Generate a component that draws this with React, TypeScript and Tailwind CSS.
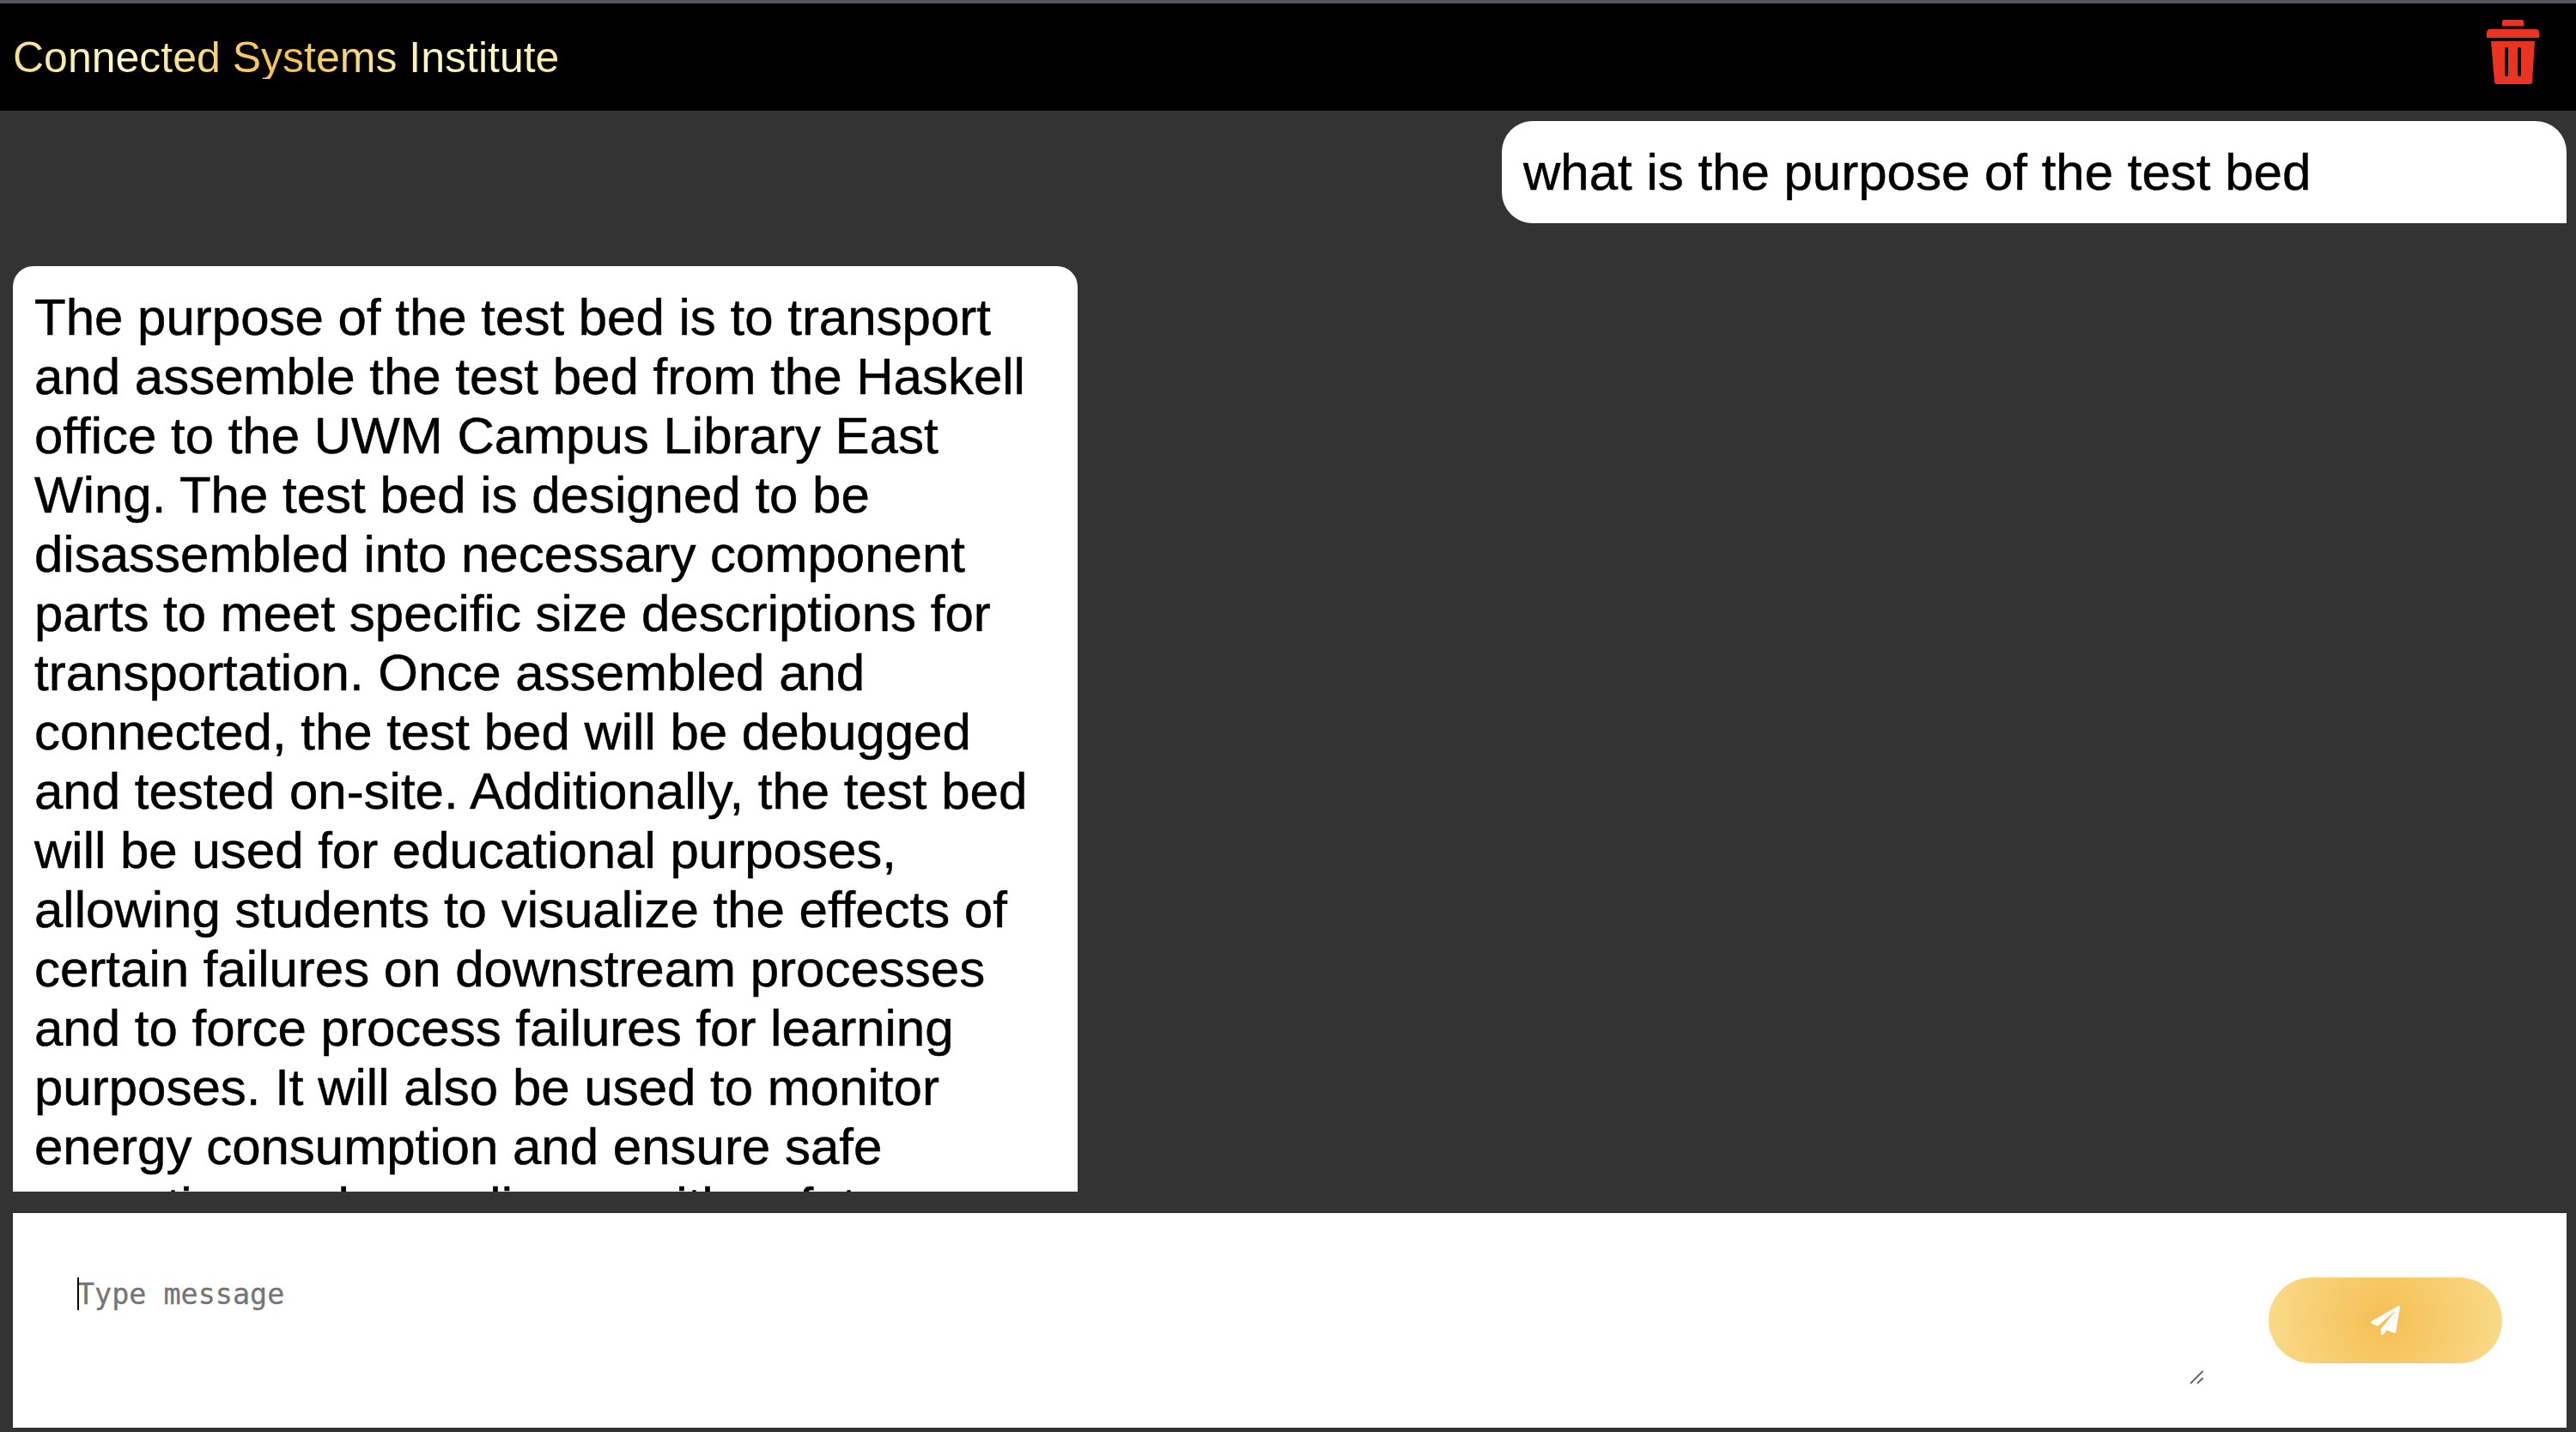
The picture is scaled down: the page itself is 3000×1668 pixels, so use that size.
import { FaPaperPlane } from "react-icons/fa";

const answer =
  "The purpose of the test bed is to transport and assemble the test bed from the Haskell office to the UWM Campus Library East Wing. The test bed is designed to be disassembled into necessary component parts to meet specific size descriptions for transportation. Once assembled and connected, the test bed will be debugged and tested on-site. Additionally, the test bed will be used for educational purposes, allowing students to visualize the effects of certain failures on downstream processes and to force process failures for learning purposes. It will also be used to monitor energy consumption and ensure safe operation and compliance with safety standards.";

function TrashIcon() {
  return (
    <svg viewBox="0 0 61 75" className="w-[61px] h-[75px] mb-[12px] fill-[#ea3323]">
      <path d="M20 0h21a2 2 0 0 1 2 2v5.5H18V2a2 2 0 0 1 2-2z" />
      <path d="M4 11h53a4 4 0 0 1 4 4v6H0v-6a4 4 0 0 1 4-4z" />
      <path
        fillRule="evenodd"
        d="M5 25h51l-3 47a3 3 0 0 1-3 3H12a3 3 0 0 1-3-3zM23 32a2 2 0 0 0-2 2v30a2 2 0 0 0 4 0V34a2 2 0 0 0-2-2zM38 32a2 2 0 0 0-2 2v30a2 2 0 0 0 4 0V34a2 2 0 0 0-2-2z"
      />
    </svg>
  );
}

export default function App() {
  return (
    <div className="h-[1668px] flex flex-col bg-[#333333] font-['Liberation_Sans',Arial,sans-serif] overflow-hidden">
      <div className="h-[4px] bg-[#55555a]" />
      <header className="h-[125px] bg-black flex items-center justify-between pl-[15px] pr-[43px]">
        <h1 className="text-[50px] leading-none bg-[linear-gradient(90deg,#f8dc8c_0%,#fffdca_20%,#f8d06c_38%,#f5bf53_50%,#f9dc8e_66%,#fff8c0_76%,#fffbc0_90%,#fbe7a0_100%)] bg-clip-text text-transparent">
          Connected Systems Institute
        </h1>
        <TrashIcon />
      </header>

      <main className="h-[1259px] pl-[15px] pr-[11px] pt-[12px] overflow-hidden flex flex-col gap-[50px]">
        <div className="flex justify-end shrink-0">
          <div className="w-[1240px] bg-white rounded-[36px] rounded-br-none p-[25px] text-[60px] leading-[69px] text-black [-webkit-text-stroke:0.5px_#000]">
            what is the purpose of the test bed
          </div>
        </div>
        <div className="flex justify-start shrink-0">
          <div className="w-[1240px] bg-white rounded-[24px] rounded-bl-none p-[25px] text-[60px] leading-[69px] text-black [-webkit-text-stroke:0.5px_#000]">
            {answer}
          </div>
        </div>
      </main>

      <div className="h-[25px]" />
      <div className="ml-[15px] mr-[11px] h-[250px] bg-white flex items-start gap-[76px] p-[75px]">
        <div className="relative flex-1 h-[124px]">
          <textarea
            placeholder="Type message"
            className="w-full h-full pt-[1px] font-['DejaVu_Sans_Mono',monospace] text-[33.4px] leading-[38px] text-black placeholder:text-[#757575] [-webkit-text-stroke:0.3px_#757575] outline-none resize-none"
          />
          {/* text cursor */}
          <span className="absolute left-0 top-0 w-[2px] h-[38px] bg-black" />
          {/* resize grip */}
          <svg viewBox="0 0 16 16" className="absolute right-0 bottom-0 w-[16px] h-[16px] stroke-[#666666] stroke-2">
            <path d="M1 15.5L15.5 1M9 15.5L15.5 9" />
          </svg>
        </div>
        <button className="w-[272px] h-[100px] rounded-[50px] flex items-center justify-center text-white text-[34px] bg-[radial-gradient(circle,#f5bf53_0%,#f9db8b_100%)]">
          <FaPaperPlane />
        </button>
      </div>
    </div>
  );
}
